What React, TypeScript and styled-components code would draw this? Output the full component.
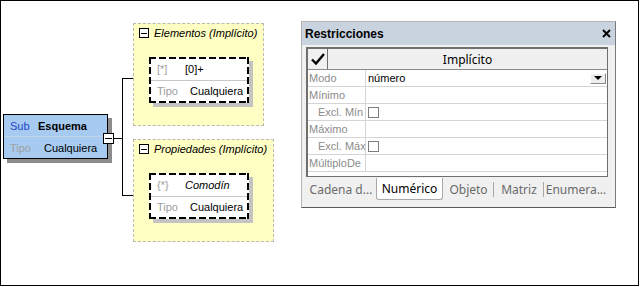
import React from 'react';
import styled, { createGlobalStyle } from 'styled-components';

const GlobalStyle = createGlobalStyle`
  html, body {
    margin: 0;
    padding: 0;
    background: #fff;
  }
  body {
    font-family: "Liberation Sans", Arial, sans-serif;
    font-size: 11px;
    color: #000;
  }
`;

const Frame = styled.div`
  box-sizing: border-box;
  width: 639px;
  height: 286px;
  border: 1px solid #000;
  background: #fff;
  display: flex;
  align-items: flex-start;
`;

/* ---------- diagram ---------- */

const Canvas = styled.div`
  position: relative;
  flex: 0 0 299px;
  height: 100%;
`;

const Wires = styled.svg`
  position: absolute;
  left: 0;
  top: 0;
`;

const SchemaNode = styled.div`
  position: absolute;
  left: 2px;
  top: 113px;
  box-sizing: border-box;
  width: 105px;
  height: 45px;
  border: 1px solid #000;
  background: #a6caf0;
  box-shadow: 4px 4px 0 #8c8c8c;
  display: flex;
  flex-direction: column;
`;

const NodeRow = styled.div<{ $divider?: string }>`
  flex: 1;
  display: flex;
  align-items: center;
  padding-left: 6px;
  white-space: nowrap;
  border-bottom: ${p => (p.$divider ? `1px solid ${p.$divider}` : 'none')};
`;

const Key = styled.span<{ $w: number; $blue?: boolean }>`
  width: ${p => p.$w}px;
  flex: none;
  color: ${p => (p.$blue ? '#2144c8' : '#a0a0a0')};
`;

const Val = styled.span<{ $bold?: boolean; $italic?: boolean }>`
  font-weight: ${p => (p.$bold ? 700 : 400)};
  font-style: ${p => (p.$italic ? 'italic' : 'normal')};
`;

const Expander = styled.div`
  position: absolute;
  left: 102px;
  top: 132px;
  box-sizing: border-box;
  width: 11px;
  height: 11px;
  border: 1px solid #000;
  background: #fff;
  display: flex;
  align-items: center;
  justify-content: center;
  &::after {
    content: '';
    width: 7px;
    height: 1px;
    background: #000;
  }
`;

const Group = styled.div<{ $left: number; $top: number; $w: number; $h: number }>`
  position: absolute;
  left: ${p => p.$left}px;
  top: ${p => p.$top}px;
  box-sizing: border-box;
  width: ${p => p.$w}px;
  height: ${p => p.$h}px;
  border: 1px dashed #b9b9b9;
  background: #ffffc4;
  padding: 4px 0 0 5px;
`;

const GroupTitle = styled.div`
  display: flex;
  align-items: center;
  gap: 5px;
  height: 10px;
  font-style: italic;
  white-space: nowrap;
`;

const MiniBox = styled.span`
  box-sizing: border-box;
  width: 10px;
  height: 10px;
  flex: none;
  border: 1px solid #000;
  background: #fff;
  display: flex;
  align-items: center;
  justify-content: center;
  &::after {
    content: '';
    width: 6px;
    height: 1px;
    background: #000;
  }
`;

/* long dashes, as the schema view draws them */
const ParticleNode = styled.div`
  box-sizing: border-box;
  width: 100px;
  height: 46px;
  margin: 19px 0 0 10px;
  padding: 2px;
  background-color: #fff;
  background-image:
    repeating-linear-gradient(90deg, #000 0 7px, transparent 7px 10px),
    repeating-linear-gradient(90deg, #000 0 7px, transparent 7px 10px),
    repeating-linear-gradient(180deg, #000 0 7px, transparent 7px 10px),
    repeating-linear-gradient(180deg, #000 0 7px, transparent 7px 10px);
  background-size: 100% 2px, 100% 2px, 2px 100%, 2px 100%;
  background-position: 0 0, 0 100%, 0 0, 100% 0;
  background-repeat: no-repeat;
  box-shadow: 4px 4px 0 #c4c4c4;
  display: flex;
  flex-direction: column;
`;

/* ---------- restrictions panel ---------- */

const Panel = styled.section`
  flex: none;
  box-sizing: border-box;
  width: 315px;
  height: 187px;
  margin: 20px 0 0 1px;
  border: 1px solid #b4b4b4;
  border-right-color: #7a7a7a;
  border-bottom-color: #5a5a5a;
  background: #f0f0f0;
  display: flex;
  flex-direction: column;
`;

const TitleBar = styled.div`
  height: 23px;
  flex: none;
  display: flex;
  align-items: center;
  justify-content: space-between;
  padding: 0 4px 0 3px;
  background: #c9d3df;
  font-weight: 700;
  font-size: 12px;
`;

const Body = styled.div`
  flex: 1;
  display: flex;
  flex-direction: column;
  padding: 2px 7px 0 4px;
`;

const Grid = styled.div`
  box-sizing: border-box;
  height: 130px;
  border: 1px solid #6f6f6f;
  border-top-width: 2px;
  border-left-width: 2px;
  background: #fff;
  display: flex;
  flex-direction: column;
`;

const HeaderRow = styled.div`
  height: 20px;
  flex: none;
  display: flex;
  border-bottom: 1px solid #8a8a8a;
  background: #f0f0f0;
`;

const CheckCell = styled.div`
  box-sizing: border-box;
  width: 20px;
  flex: none;
  border-right: 1px solid #6f6f6f;
  display: flex;
  align-items: center;
  justify-content: center;
`;

const HeaderTitle = styled.div`
  flex: 1;
  display: flex;
  align-items: center;
  justify-content: center;
  font-family: "Noto Sans", "Open Sans", sans-serif;
  font-size: 12px;
`;

const PropRow = styled.div`
  height: 16px;
  flex: none;
  display: flex;
  border-bottom: 1px solid #d5d5d5;
`;

const PropLabel = styled.div<{ $indent?: boolean }>`
  box-sizing: border-box;
  width: 58px;
  flex: none;
  display: flex;
  align-items: center;
  padding-left: ${p => (p.$indent ? '10px' : '1px')};
  border-right: 1px solid #d5d5d5;
  color: #8c8c8c;
  white-space: nowrap;
  overflow: hidden;
`;

const PropValue = styled.div`
  flex: 1;
  display: flex;
  align-items: center;
  padding-left: 2px;
  padding-right: 1px;
`;

const Grow = styled.span`
  flex: 1;
`;

const DropButton = styled.span`
  box-sizing: border-box;
  width: 16px;
  height: 11px;
  border: 1px solid #fff;
  border-right-color: #8a8a8a;
  border-bottom-color: #8a8a8a;
  background: #eeeeee;
  display: flex;
  align-items: center;
  justify-content: center;
  &::after {
    content: '';
    border-left: 4px solid transparent;
    border-right: 4px solid transparent;
    border-top: 4px solid #000;
  }
`;

const CheckBox = styled.span`
  box-sizing: border-box;
  width: 11px;
  height: 11px;
  border: 1px solid #7d7d7d;
  background: #fff;
`;

const Tabs = styled.div`
  height: 22px;
  margin-top: 1px;
  display: flex;
  align-items: stretch;
  font-family: "Noto Sans", "Open Sans", sans-serif;
  font-size: 12px;
`;

const Tab = styled.div<{ $w: number; $active?: boolean; $sep?: boolean }>`
  box-sizing: border-box;
  width: ${p => p.$w}px;
  flex: none;
  display: flex;
  align-items: center;
  justify-content: center;
  white-space: nowrap;
  color: ${p => (p.$active ? '#000' : '#6a6a6a')};
  background: ${p => (p.$active ? '#fff' : 'transparent')};
  border: ${p => (p.$active ? '1px solid #a8a8a8' : 'none')};
  border-top: none;
  border-radius: ${p => (p.$active ? '0 0 3px 3px' : '0')};
  position: relative;
  &::after {
    content: '';
    display: ${p => (p.$sep ? 'block' : 'none')};
    position: absolute;
    right: 0;
    top: 4px;
    bottom: 3px;
    width: 1px;
    background: #a8a8a8;
  }
`;

const rows: { label: string; indent?: boolean; kind?: 'select' | 'check'; value?: string }[] = [
  { label: 'Modo', kind: 'select', value: 'número' },
  { label: 'Mínimo' },
  { label: 'Excl. Mín', indent: true, kind: 'check' },
  { label: 'Máximo' },
  { label: 'Excl. Máx', indent: true, kind: 'check' },
  { label: 'MúltiploDe' },
];

const App: React.FC = () => {
  return (
    <>
      <GlobalStyle />
      <Frame>
        <Canvas>
          <Wires width={299} height={284} shapeRendering="crispEdges">
            <line x1={112} y1={137.5} x2={122} y2={137.5} stroke="#000" />
            <line x1={121.5} y1={77} x2={121.5} y2={195} stroke="#000" />
            <line x1={121} y1={77.5} x2={148} y2={77.5} stroke="#000" />
            <line x1={121} y1={194.5} x2={148} y2={194.5} stroke="#000" />
          </Wires>

          <SchemaNode>
            <NodeRow $divider="#c3d3e6">
              <Key $w={28} $blue>Sub</Key>
              <Val $bold>Esquema</Val>
            </NodeRow>
            <NodeRow>
              <Key $w={34}>Tipo</Key>
              <Val>Cualquiera</Val>
            </NodeRow>
          </SchemaNode>
          <Expander />

          <Group $left={132} $top={22} $w={131} $h={103}>
            <GroupTitle>
              <MiniBox />
              Elementos (Implícito)
            </GroupTitle>
            <ParticleNode>
              <NodeRow $divider="#c8c8c8">
                <Key $w={28}>[*]</Key>
                <Val>[0]+</Val>
              </NodeRow>
              <NodeRow>
                <Key $w={33}>Tipo</Key>
                <Val>Cualquiera</Val>
              </NodeRow>
            </ParticleNode>
          </Group>

          <Group $left={132} $top={138} $w={141} $h={103}>
            <GroupTitle>
              <MiniBox />
              Propiedades (Implícito)
            </GroupTitle>
            <ParticleNode>
              <NodeRow $divider="#c8c8c8">
                <Key $w={28}>{'{*}'}</Key>
                <Val $italic>Comodín</Val>
              </NodeRow>
              <NodeRow>
                <Key $w={33}>Tipo</Key>
                <Val>Cualquiera</Val>
              </NodeRow>
            </ParticleNode>
          </Group>
        </Canvas>

        <Panel>
          <TitleBar>
            <span>Restricciones</span>
            <svg width="9" height="9" viewBox="0 0 9 9">
              <path d="M1 1 L8 8 M8 1 L1 8" stroke="#000" strokeWidth="2" />
            </svg>
          </TitleBar>
          <Body>
            <Grid>
              <HeaderRow>
                <CheckCell>
                  <svg width="16" height="14" viewBox="0 0 16 14">
                    <path d="M2 7.5 L6 11.5 L14 2" stroke="#000" strokeWidth="2.4" fill="none" />
                  </svg>
                </CheckCell>
                <HeaderTitle>Implícito</HeaderTitle>
              </HeaderRow>
              {rows.map(r => (
                <PropRow key={r.label}>
                  <PropLabel $indent={r.indent}>{r.label}</PropLabel>
                  <PropValue>
                    {r.kind === 'select' && (
                      <>
                        <Grow>{r.value}</Grow>
                        <DropButton />
                      </>
                    )}
                    {r.kind === 'check' && <CheckBox />}
                  </PropValue>
                </PropRow>
              ))}
            </Grid>
            <Tabs>
              <Tab $w={70}>Cadena d...</Tab>
              <Tab $w={67} $active>Numérico</Tab>
              <Tab $w={51} $sep>Objeto</Tab>
              <Tab $w={50} $sep>Matriz</Tab>
              <Tab $w={64}>Enumera...</Tab>
            </Tabs>
          </Body>
        </Panel>
      </Frame>
    </>
  );
};

export default App;
